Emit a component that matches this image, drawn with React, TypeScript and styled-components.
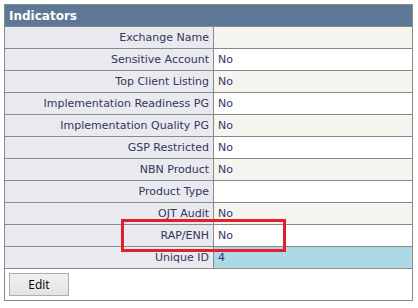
import styled, { createGlobalStyle } from "styled-components";

const GlobalStyle = createGlobalStyle`
  html, body {
    margin: 0;
    padding: 0;
    background: #fff;
  }
  body {
    font-family: "DejaVu Sans", Verdana, sans-serif;
  }
`;

interface Indicator {
  label: string;
  value: string;
  highlight?: boolean;
}

const indicators: Indicator[] = [
  { label: "Exchange Name", value: "" },
  { label: "Sensitive Account", value: "No" },
  { label: "Top Client Listing", value: "No" },
  { label: "Implementation Readiness PG", value: "No" },
  { label: "Implementation Quality PG", value: "No" },
  { label: "GSP Restricted", value: "No" },
  { label: "NBN Product", value: "No" },
  { label: "Product Type", value: "" },
  { label: "OJT Audit", value: "No" },
  { label: "RAP/ENH", value: "No" },
  { label: "Unique ID", value: "4", highlight: true },
];

const App = () => {
  return (
    <>
      <GlobalStyle />
      <StyledPage>
        <StyledPanel>
          <StyledTable>
            <colgroup>
              <col style={{ width: 209 }} />
              <col />
            </colgroup>
            <tbody>
              <tr>
                <StyledHeaderCell colSpan={2}>Indicators</StyledHeaderCell>
              </tr>
              {indicators.map((item, i) => (
                <tr key={item.label}>
                  <StyledLabelCell>{item.label}</StyledLabelCell>
                  <StyledValueCell $striped={i % 2 === 0} $highlight={item.highlight}>
                    {item.value}
                  </StyledValueCell>
                </tr>
              ))}
              <tr>
                <StyledActionCell colSpan={2}>
                  <StyledButton type="button">Edit</StyledButton>
                </StyledActionCell>
              </tr>
            </tbody>
          </StyledTable>
          <StyledMarker />
        </StyledPanel>
      </StyledPage>
    </>
  );
};

export default App;

const StyledPage = styled.div`
  padding: 4px;
`;

const StyledPanel = styled.div`
  position: relative;
  width: 409px;
`;

const StyledTable = styled.table`
  width: 409px;
  border-collapse: collapse;
  table-layout: fixed;
  border: 1px solid #8a8a8a;
  font-size: 11px;
`;

const StyledHeaderCell = styled.th`
  height: 21px;
  padding: 0 4px;
  background: #5d7797;
  color: #fff;
  text-align: left;
  font-family: "DejaVu Sans", Tahoma, sans-serif;
  font-weight: bold;
  font-size: 12px;
  border: 1px solid #8a8a8a;
`;

const StyledLabelCell = styled.td`
  height: 21px;
  padding: 0 4px;
  background: #e8eaef;
  color: #35355a;
  text-align: right;
  white-space: nowrap;
  border: 1px solid #8a8a8a;
`;

const StyledValueCell = styled.td<{ $striped?: boolean; $highlight?: boolean }>`
  height: 21px;
  padding: 0 4px;
  color: #35356a;
  background: ${(p) => (p.$highlight ? "#add8e6" : p.$striped ? "#f5f4ef" : "#ffffff")};
  border: 1px solid #8a8a8a;
`;

const StyledActionCell = styled.td`
  height: 31px;
  padding: 0 4px;
  background: #fff;
  border: 1px solid #8a8a8a;
`;

const StyledButton = styled.button`
  display: block;
  width: 60px;
  height: 23px;
  padding: 0;
  border: 1px solid #adadad;
  border-radius: 0;
  background: linear-gradient(#f0f0f0, #e3e3e3);
  color: #000;
  font-family: "Open Sans", "Liberation Sans", sans-serif;
  font-size: 12px;
`;

const StyledMarker = styled.div`
  position: absolute;
  left: 117px;
  top: 215px;
  width: 159px;
  height: 27px;
  border: 3px solid #e51f2a;
`;
